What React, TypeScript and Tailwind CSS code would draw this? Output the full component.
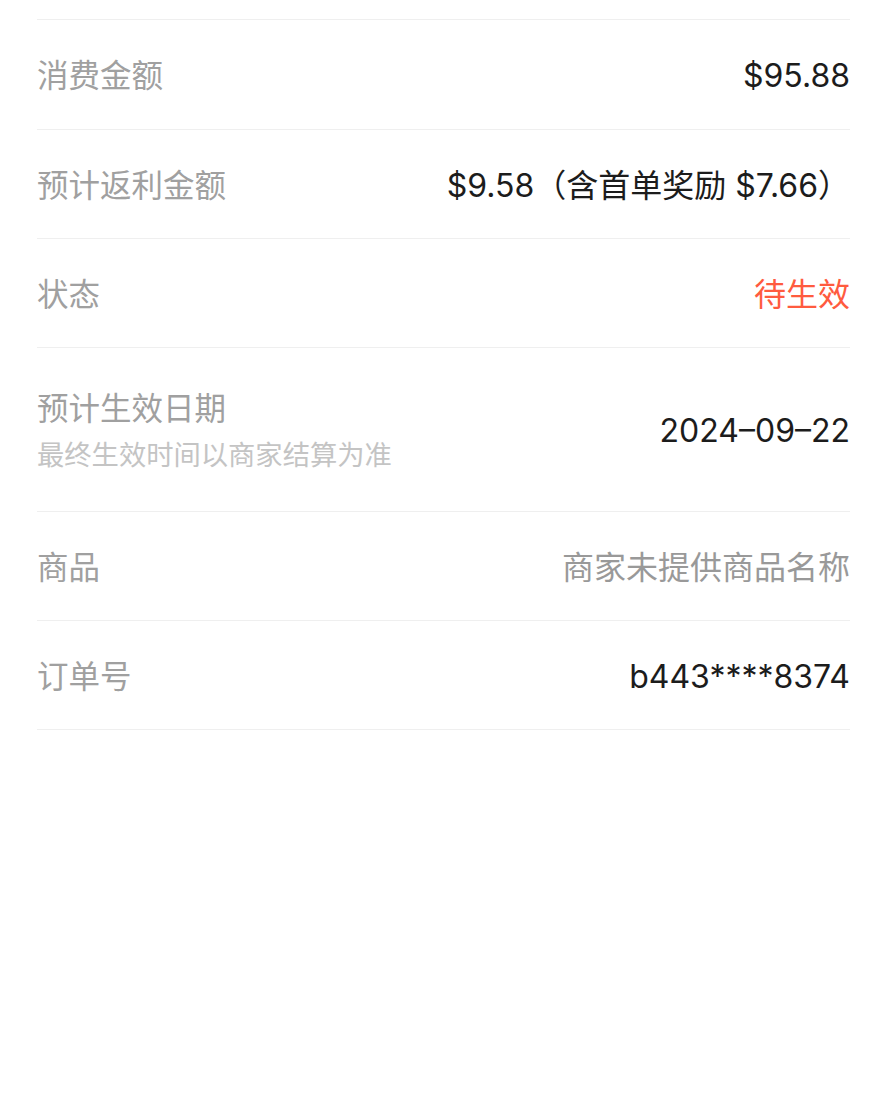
const font = { fontFamily: '"Inter", "Noto Sans CJK SC", sans-serif' };

type Row = {
  label: string;
  sub?: string;
  value: string;
  tone: 'dark' | 'red' | 'gray';
  h: string;
};

const rows: Row[] = [
  { label: '消费金额', value: '$95.88', tone: 'dark', h: 'h-[110px]' },
  { label: '预计返利金额', value: '$9.58（含首单奖励 $7.66）', tone: 'dark', h: 'h-[109px]' },
  { label: '状态', value: '待生效', tone: 'red', h: 'h-[109px]' },
  {
    label: '预计生效日期',
    sub: '最终生效时间以商家结算为准',
    value: '2024–09–22',
    tone: 'dark',
    h: 'h-[164px]',
  },
  { label: '商品', value: '商家未提供商品名称', tone: 'gray', h: 'h-[109px]' },
  { label: '订单号', value: 'b443****8374', tone: 'dark', h: 'h-[109px]' },
];

const toneClass = {
  dark: 'text-[#1c1c1c]',
  red: 'text-[#ff5b3f]',
  gray: 'text-[#999999]',
};

export default function App() {
  return (
    <div className="min-h-[1110px] w-full bg-white" style={font}>
      <div className="mx-[37px]">
        <div className="h-[20px] border-b border-[#efefef]" />
        {rows.map((r) => (
          <div
            key={r.label}
            className={`flex items-center justify-between border-b border-[#efefef] pt-[3px] ${r.h}`}
          >
            <div className="flex flex-col">
              <span className="text-[31.5px] leading-[44px] text-[#a0a0a0]">{r.label}</span>
              {r.sub && (
                <span className="mt-[6px] text-[27.3px] leading-[38px] text-[#c4c4c4]">{r.sub}</span>
              )}
            </div>
            <span className={`text-[32px] leading-[44px] ${toneClass[r.tone]}`}>{r.value}</span>
          </div>
        ))}
      </div>
    </div>
  );
}
